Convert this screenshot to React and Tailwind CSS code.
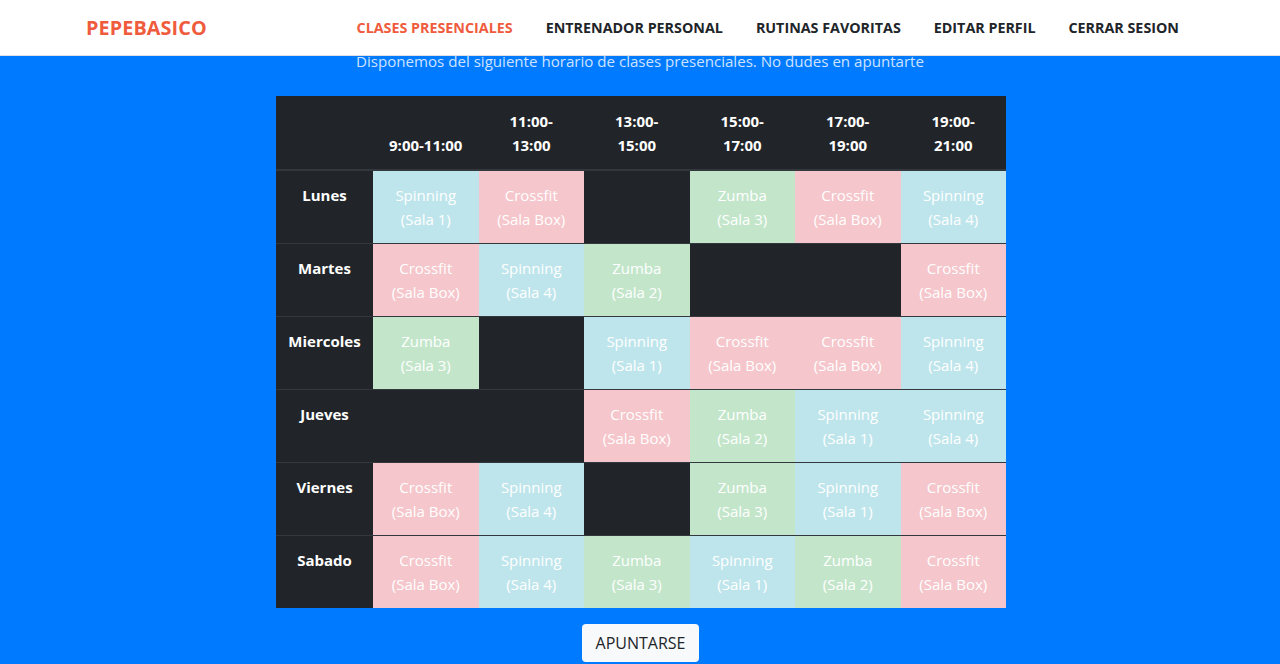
const FONT = { fontFamily: '"Open Sans", "Noto Sans", sans-serif' };

const HOURS = [["9:00-11:00"], ["11:00-", "13:00"], ["13:00-", "15:00"], ["15:00-", "17:00"], ["17:00-", "19:00"], ["19:00-", "21:00"]];

const CLASS = {
  S: { name: "Spinning", bg: "bg-[#bee5eb]" },
  C: { name: "Crossfit", bg: "bg-[#f5c6cb]" },
  Z: { name: "Zumba", bg: "bg-[#c3e6cb]" },
};

// [tipo, sala] o null cuando no hay clase
const SCHEDULE = [
  { day: "Lunes", cells: [["S", "Sala 1"], ["C", "Sala Box"], null, ["Z", "Sala 3"], ["C", "Sala Box"], ["S", "Sala 4"]] },
  { day: "Martes", cells: [["C", "Sala Box"], ["S", "Sala 4"], ["Z", "Sala 2"], null, null, ["C", "Sala Box"]] },
  { day: "Miercoles", cells: [["Z", "Sala 3"], null, ["S", "Sala 1"], ["C", "Sala Box"], ["C", "Sala Box"], ["S", "Sala 4"]] },
  { day: "Jueves", cells: [null, null, ["C", "Sala Box"], ["Z", "Sala 2"], ["S", "Sala 1"], ["S", "Sala 4"]] },
  { day: "Viernes", cells: [["C", "Sala Box"], ["S", "Sala 4"], null, ["Z", "Sala 3"], ["S", "Sala 1"], ["C", "Sala Box"]] },
  { day: "Sabado", cells: [["C", "Sala Box"], ["S", "Sala 4"], ["Z", "Sala 3"], ["S", "Sala 1"], ["Z", "Sala 2"], ["C", "Sala Box"]] },
];

const NAV = ["CLASES PRESENCIALES", "ENTRENADOR PERSONAL", "RUTINAS FAVORITAS", "EDITAR PERFIL", "CERRAR SESION"];

export default function App() {
  return (
    <div className="min-h-screen bg-[#007bff] text-white" style={FONT}>
      <nav className="h-[56px] bg-white border-b border-[#dee2e6] flex items-center pl-[86px] pr-[101px]">
        <span className="text-[19.8px] font-bold text-[#ef5b3d] tracking-[0.1px]">PEPEBASICO</span>
        <ul className="ml-auto flex gap-[33px]">
          {NAV.map((item, i) => (
            <li key={item} className={`text-[14.3px] font-bold ${i === 0 ? "text-[#ef5b3d]" : "text-[#212529]"}`}>
              {item}
            </li>
          ))}
        </ul>
      </nav>

      <p className="text-center text-[15.1px] leading-[14px] text-[#cfe2ff] -mt-[2px]">
        Disponemos del siguiente horario de clases presenciales. No dudes en apuntarte
      </p>

      <div className="flex justify-center mt-[28px] pl-[2px]">
        <table className="w-[730px] border-collapse bg-[#212529] table-fixed">
          <colgroup>
            <col className="w-[97px]" />
          </colgroup>
          <thead>
            <tr className="border-b-2 border-[#32383e]">
              <th className="p-3" />
              {HOURS.map((h, i) => (
                <th key={i} className="px-1 pt-[13px] pb-3 align-bottom text-[15px] leading-6 font-bold text-center">
                  {h.map((l) => (
                    <div key={l}>{l}</div>
                  ))}
                </th>
              ))}
            </tr>
          </thead>
          <tbody>
            {SCHEDULE.map((row) => (
              <tr key={row.day} className="border-t border-[#32383e]">
                <th className="p-3 align-top text-[15px] leading-6 font-bold text-center">{row.day}</th>
                {row.cells.map((c, i) =>
                  c ? (
                    <td key={i} className={`px-1 py-3 align-top text-center text-[15px] leading-6 ${CLASS[c[0]].bg}`}>
                      <div>{CLASS[c[0]].name}</div>
                      <div>({c[1]})</div>
                    </td>
                  ) : (
                    <td key={i} className="p-3" />
                  )
                )}
              </tr>
            ))}
          </tbody>
        </table>
      </div>

      <div className="flex justify-center mt-4 pl-[1px]">
        <button className="bg-[#f8f9fa] text-[#212529] text-[16px] leading-6 px-[13.5px] py-[7px] rounded-[4px]">APUNTARSE</button>
      </div>
    </div>
  );
}
